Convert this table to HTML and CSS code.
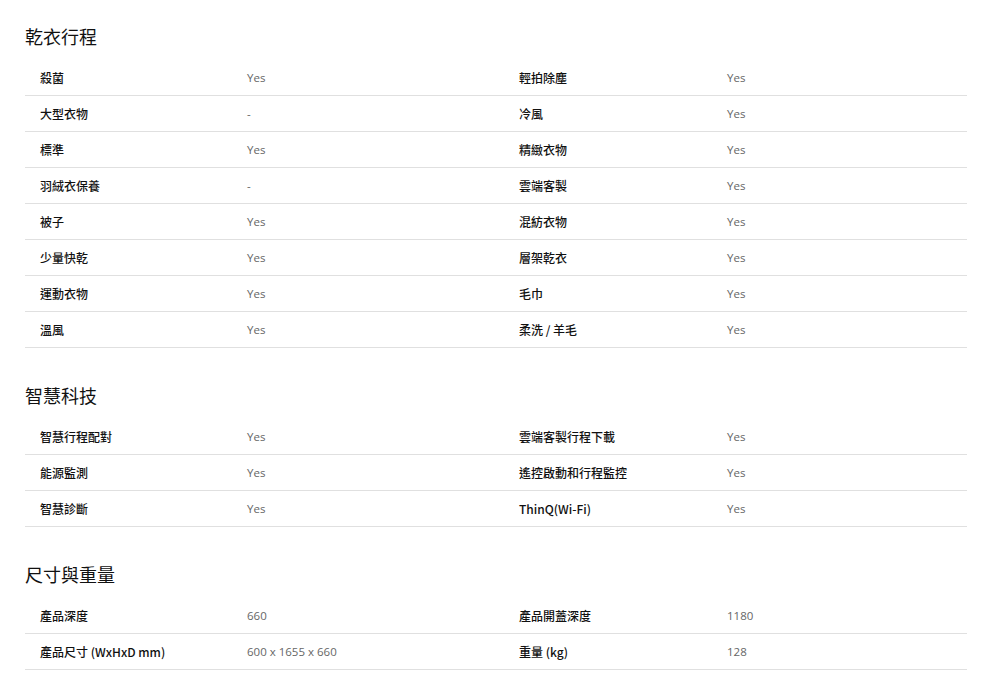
FILE: index.html
```html
<!DOCTYPE html>
<html lang="zh-Hant">
<head>
<meta charset="utf-8">
<link rel="stylesheet" href="styles.css">
</head>
<body>
<div class="page">
  <section class="spec">
    <h2 class="spec-title">乾衣行程</h2>
    <div class="row"><span class="label">殺菌</span><span class="value">Yes</span><span class="label">輕拍除塵</span><span class="value">Yes</span></div>
    <div class="row"><span class="label">大型衣物</span><span class="value">-</span><span class="label">冷風</span><span class="value">Yes</span></div>
    <div class="row"><span class="label">標準</span><span class="value">Yes</span><span class="label">精緻衣物</span><span class="value">Yes</span></div>
    <div class="row"><span class="label">羽絨衣保養</span><span class="value">-</span><span class="label">雲端客製</span><span class="value">Yes</span></div>
    <div class="row"><span class="label">被子</span><span class="value">Yes</span><span class="label">混紡衣物</span><span class="value">Yes</span></div>
    <div class="row"><span class="label">少量快乾</span><span class="value">Yes</span><span class="label">層架乾衣</span><span class="value">Yes</span></div>
    <div class="row"><span class="label">運動衣物</span><span class="value">Yes</span><span class="label">毛巾</span><span class="value">Yes</span></div>
    <div class="row"><span class="label">溫風</span><span class="value">Yes</span><span class="label">柔洗 / 羊毛</span><span class="value">Yes</span></div>
  </section>
  <section class="spec">
    <h2 class="spec-title">智慧科技</h2>
    <div class="row"><span class="label">智慧行程配對</span><span class="value">Yes</span><span class="label">雲端客製行程下載</span><span class="value">Yes</span></div>
    <div class="row"><span class="label">能源監測</span><span class="value">Yes</span><span class="label">遙控啟動和行程監控</span><span class="value">Yes</span></div>
    <div class="row"><span class="label">智慧診斷</span><span class="value">Yes</span><span class="label">ThinQ(Wi-Fi)</span><span class="value">Yes</span></div>
  </section>
  <section class="spec">
    <h2 class="spec-title">尺寸與重量</h2>
    <div class="row"><span class="label">產品深度</span><span class="value">660</span><span class="label">產品開蓋深度</span><span class="value">1180</span></div>
    <div class="row"><span class="label">產品尺寸 (WxHxD mm)</span><span class="value">600 x 1655 x 660</span><span class="label">重量 (kg)</span><span class="value">128</span></div>
  </section>
</div>
</body>
</html>
```
FILE: styles.css
```css
html, body {
  margin: 0;
  padding: 0;
  background: #fff;
}
body {
  font-family: "Noto Sans CJK TC", "Noto Sans", sans-serif;
  color: #111;
}
.page {
  width: 942px;
  padding: 24px 0 0 25px;
}
.spec {
  margin-bottom: 35px;
}
.spec-title {
  margin: 0 0 12px;
  height: 24px;
  line-height: 24px;
  font-size: 18px;
  font-weight: 400;
  color: #111;
}
.row {
  display: grid;
  grid-template-columns: 207px 272px 208px 1fr;
  height: 35px;
  align-items: center;
  border-bottom: 1px solid #e0e0e0;
}
.label, .value {
  padding-left: 15px;
  font-size: 12px;
  line-height: 16px;
  white-space: nowrap;
}
.label {
  color: #111;
  font-weight: 500;
}
.value {
  font-family: "Open Sans", "Noto Sans", sans-serif;
  color: #666;
  font-weight: 400;
  font-size: 11.5px;
}
```
